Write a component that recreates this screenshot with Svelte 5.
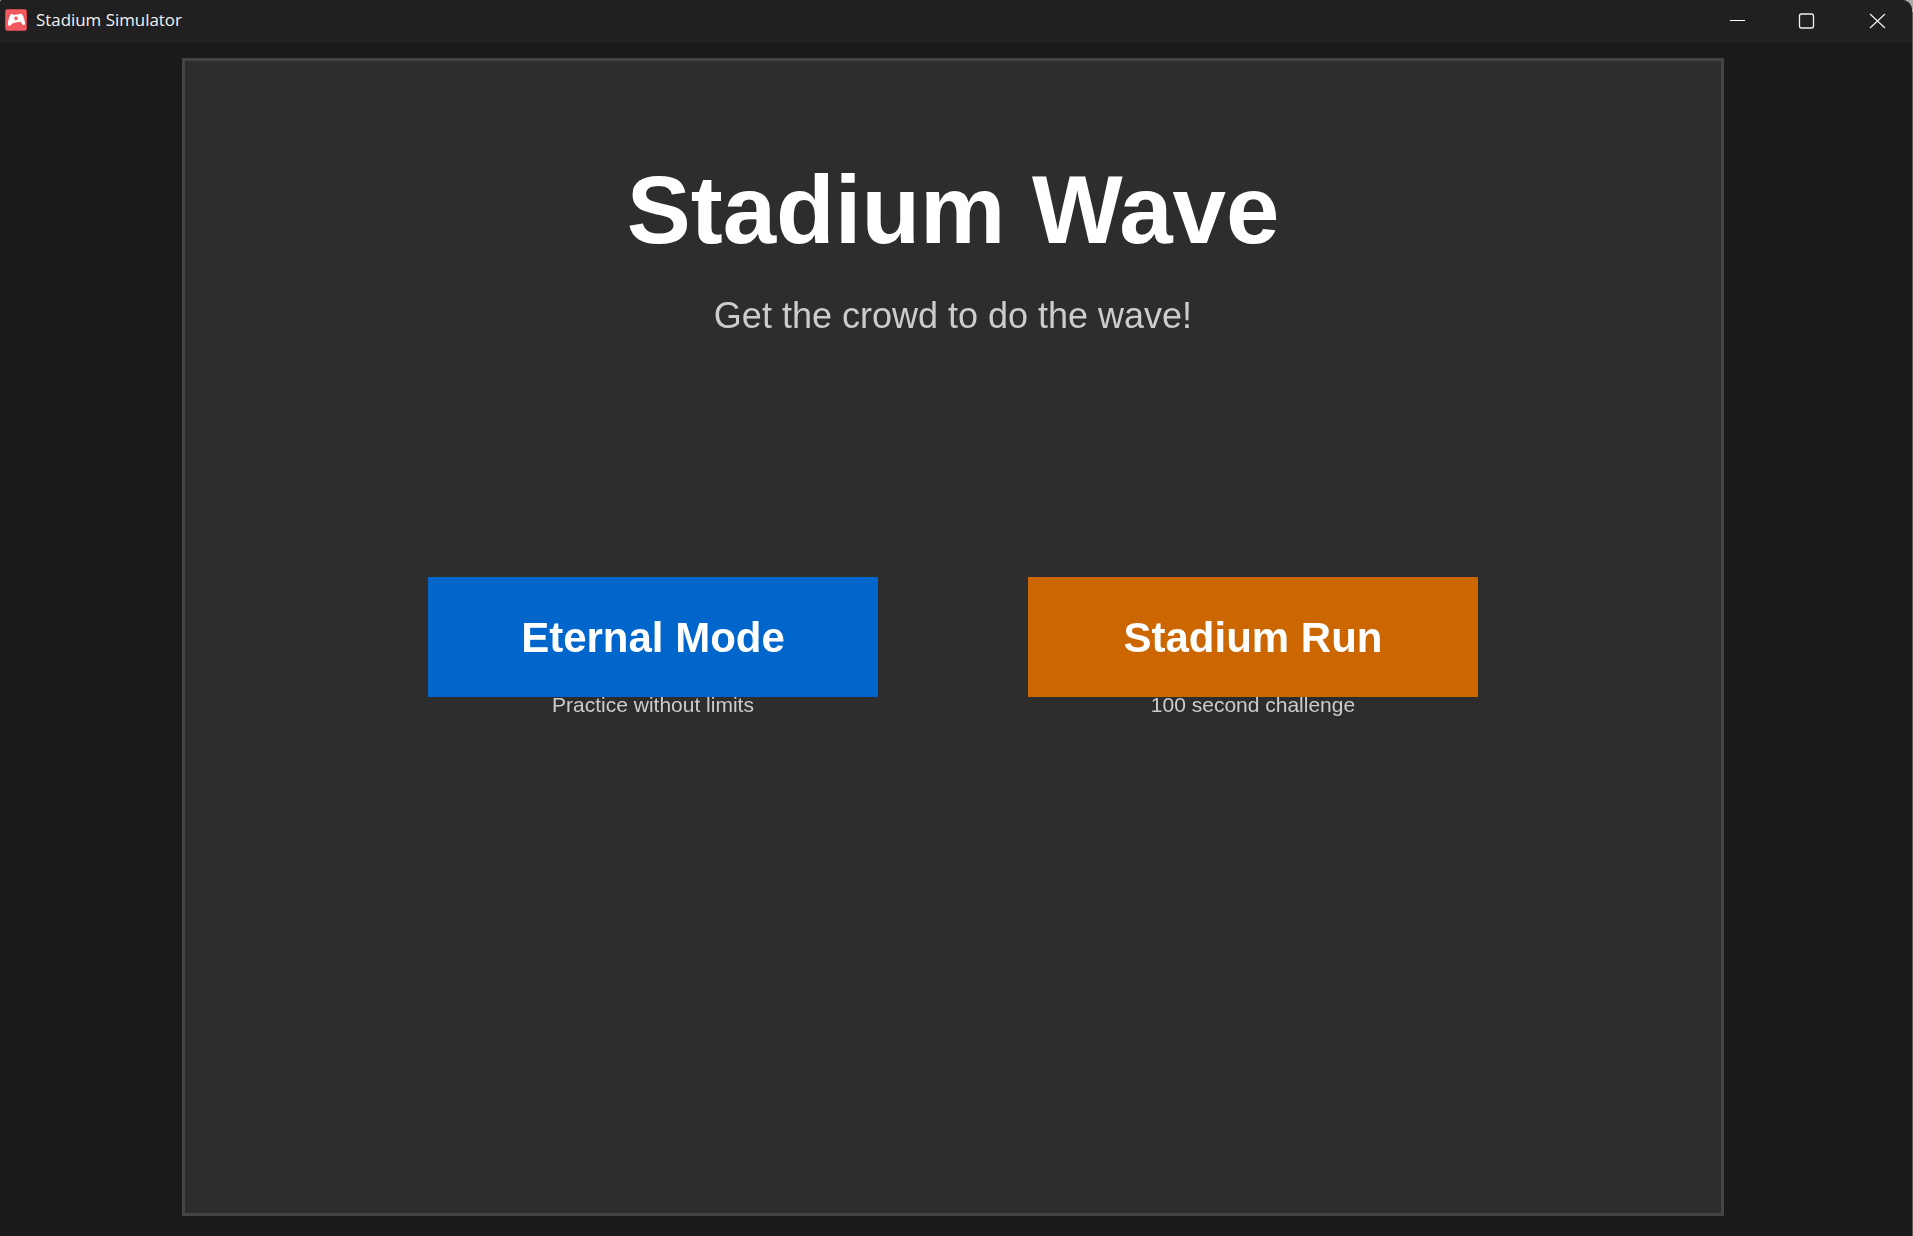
<script>
  const modes = [
    { name: 'Eternal Mode', hint: 'Practice without limits', tone: 'blue' },
    { name: 'Stadium Run', hint: '100 second challenge', tone: 'orange' }
  ];
</script>

<div class="desktop">
  <div class="window">
    <header class="titlebar">
      <svg class="appicon" viewBox="0 0 22 22" aria-hidden="true">
        <rect x="0.5" y="0.5" width="21" height="21" rx="2" fill="#f05a5f" stroke="#c9484d" />
        <path d="M5.6 5.4 C7 4.6 8 5.2 9.2 6 L14 5.2 C15.2 4.4 16.4 4.6 17.2 5.6 C18.6 7.6 19.6 11.2 20 14.2 C20.2 16 18.6 16.6 17.6 15.4 L15.4 12.8 C13 13 10 13.6 7.8 14.2 L5.4 16.4 C4 17.4 2.4 16.6 2.8 14.6 C3.2 11.6 4.2 7.4 5.6 5.4 Z" fill="#fff" />
        <rect x="9" y="8.6" width="4" height="1.6" fill="#f05a5f" />
        <rect x="10.2" y="7.4" width="1.6" height="4" fill="#f05a5f" />
      </svg>
      <span class="apptitle">Stadium Simulator</span>
      <div class="controls">
        <svg viewBox="0 0 70 43" aria-hidden="true"><path d="M29 20.5 H44" stroke="#fff" stroke-width="1" /></svg>
        <svg viewBox="0 0 70 43" aria-hidden="true"><rect x="28.5" y="14" width="14" height="14" rx="2" fill="none" stroke="#f0f0f0" stroke-width="1.3" /></svg>
        <svg viewBox="0 0 70 43" aria-hidden="true"><path d="M29 14 L44 28 M44 14 L29 28" stroke="#f0f0f0" stroke-width="1.2" fill="none" /></svg>
      </div>
    </header>

    <main class="stage">
      <section class="panel">
        <h1 class="soft">Stadium Wave</h1>
        <p class="tagline soft">Get the crowd to do the wave!</p>
        <div class="modes">
          {#each modes as mode}
            <div class="mode">
              <button class={mode.tone}><span class="soft">{mode.name}</span></button>
              <span class="hint soft">{mode.hint}</span>
            </div>
          {/each}
        </div>
      </section>
    </main>
  </div>
</div>

<style>
  :global(body) {
    margin: 0;
    background: #5a5a5a;
  }

  .desktop {
    width: 1913px;
    height: 1236px;
    background: linear-gradient(#aaa 0 12px, #5a5a5a 12px);
    overflow: hidden;
  }

  .window {
    width: 1912px;
    height: 1236px;
    display: flex;
    flex-direction: column;
    background: #1a1a1a;
    border-radius: 3px 10px 0 0;
    overflow: hidden;
  }

  .titlebar {
    height: 43px;
    flex: none;
    display: flex;
    align-items: center;
    padding-left: 5px;
    background: #202020;
  }

  .appicon {
    width: 22px;
    height: 22px;
    margin-top: -3px;
  }

  .apptitle {
    margin: -4px 0 0 9px;
    color: #f2f2f2;
    font: 16.9px "Open Sans", sans-serif;
  }

  .controls {
    margin-left: auto;
    margin-right: 1px;
    display: flex;
  }

  .controls svg {
    width: 70px;
    height: 43px;
  }

  .stage {
    padding: 15px 0 0 182px;
  }

  .panel {
    box-sizing: border-box;
    width: 1542px;
    height: 1158px;
    border: 3px solid #444;
    background: #2d2d2d;
    display: flex;
    flex-direction: column;
    align-items: center;
    font-family: "Liberation Sans", Arial, sans-serif;
  }

  .soft {
    filter: blur(0.4px);
  }

  h1 {
    margin: 94px 0 0;
    color: #fff;
    font-size: 96px;
    line-height: 110px;
    font-weight: 700;
  }

  .tagline {
    margin: 30px 0 0;
    color: #ccc;
    font-size: 36px;
    line-height: 42px;
  }

  .modes {
    margin-top: 240px;
    display: flex;
    gap: 150px;
  }

  .mode {
    display: flex;
    flex-direction: column;
    align-items: center;
  }

  button {
    width: 450px;
    height: 120px;
    border: 0;
    padding: 2px 0 0;
    color: #fff;
    font: 700 42px "Liberation Sans", Arial, sans-serif;
  }

  button span {
    display: inline-block;
  }

  .blue { background: #0066cc; }
  .orange { background: #cc6600; }

  .hint {
    margin-top: -4px;
    color: #ccc;
    font-size: 21px;
    line-height: 24px;
  }
</style>
